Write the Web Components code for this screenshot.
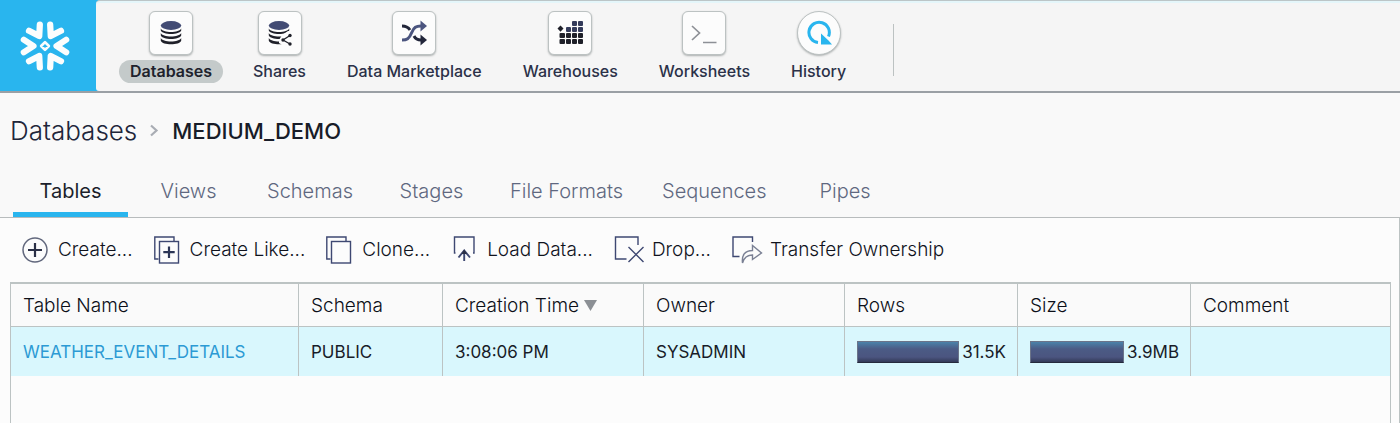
<!DOCTYPE html>
<html lang="en">
<head>
<meta charset="utf-8">
<title>Databases - MEDIUM_DEMO</title>
<style>
  html, body { height: 100%; }
  body {
    margin: 0;
    font-family: "Inter", "Liberation Sans", sans-serif;
    color: #181c28;
    background: #f9f9f9;
    overflow: hidden;
  }
</style>
</head>
<body>
<console-app></console-app>
<script>
const ICONS = {
  database: `<svg width="22" height="26" viewBox="0 0 22 26" fill="#1f2029"><ellipse cx="11" cy="5.5" rx="10.2" ry="4.4" fill="#434c74"/><path d="M.8 8.6c1.400 4.600 19 4.600 20.400 0v1.900c-1.400 4.600-19 4.600-20.400 0zM.8 13.100c1.400 4.600 19 4.600 20.400 0v2.400c-1.400 4.600-19 4.600-20.400 0zM.8 18.100c1.400 4.600 19 4.600 20.400 0v2.600c-1.400 4.700-19 4.700-20.400 0z"/></svg>`,
  shares: `<svg width="26" height="26" viewBox="0 0 26 26" fill="#1f2029"><ellipse cx="12" cy="5.500" rx="10.200" ry="4.400" fill="#434c74"/><path d="M1.800 8.600c1.400 4.600 19 4.600 20.400 0v1.900c-1.400 4.600-19 4.600-20.400 0zM1.800 13.100c1.400 4.600 19 4.600 20.400 0v2.400c-1.400 4.600-19 4.600-20.400 0zM1.800 18.100c1.400 4.600 19 4.600 20.400 0v2.600c-1.400 4.700-19 4.700-20.400 0z"/><path d="M12 20 15 15 21 11H26V26H17L12 23z" fill="#fcfcfc"/><path d="M23 15.500 16 20 23 24" fill="none" stroke="#1f2029" stroke-width="1.300"/><circle cx="23" cy="15.500" r="1.700"/><circle cx="16" cy="20" r="1.700"/><circle cx="23" cy="24" r="1.700"/></svg>`,
  market: `<svg width="26" height="26" viewBox="0 0 26 26" fill="none" stroke-width="3"><path d="M1 6C5 6 7 7 9 10M13 16c1.500 3 3.500 4 7 4" stroke="#22263a"/><path d="M19.500 14.500 26 20 19.500 25.500z" fill="#22263a"/><path d="M1 20c5 0 7-1 9.500-7S15 6 20 6" stroke="#4b557f"/><path d="M19.500 .5 26 6 19.500 11.500z" fill="#4b557f"/></svg>`,
  warehouse: `<svg width="28" height="26" viewBox="0 0 28 26" fill="#1f2029"><g fill="#343b5b"><rect x="16" y="1" width="5" height="5" rx="1"/><rect x="22" y="1" width="5" height="5" rx="1"/><rect x="10" y="7" width="5" height="5" rx="1"/><rect x="16" y="7" width="5" height="5" rx="1"/><rect x="22" y="7" width="5" height="5" rx="1"/></g><path d="M4.500 5.500 7.500 8.500 4.500 11.800 1.500 8.500z"/><rect x="3.500" y="13" width="5.500" height="5" rx="1"/><rect x="10" y="13" width="5" height="5" rx="1"/><rect x="16" y="13" width="5" height="5" rx="1"/><rect x="22" y="13" width="5" height="5" rx="1"/><rect x="3.500" y="19" width="5.500" height="5" rx="1"/><rect x="10" y="19" width="5" height="5" rx="1"/><rect x="16" y="19" width="5" height="5" rx="1"/><rect x="22" y="19" width="5" height="5" rx="1"/></svg>`,
  worksheet: `<svg width="26" height="26" viewBox="0 0 26 26" fill="none" stroke="#8d9096" stroke-width="1.700"><path d="M1 6 8.500 13 1 20M12 22.500H25.500"/></svg>`,
  history: `<svg width="26" height="26" viewBox="0 0 26 26"><path d="M12 22.600A10.200 10.200 0 1 1 22.500 16.500" fill="none" stroke="#29b5ee" stroke-width="3"/><path d="M15 13.500V24.500H26L22.500 20.500z" fill="#29b5ee"/></svg>`,
  create: `<svg width="26" height="26" viewBox="0 0 26 26" fill="none"><circle cx="13" cy="13" r="12" stroke="#62687d" stroke-width="1.500"/><path d="M13 6V20M6 13H20" stroke="#2b3046" stroke-width="2.200"/></svg>`,
  like: `<svg width="26" height="28" viewBox="0 0 26 28" fill="none" stroke="#3e4872" stroke-width="1.400"><path d="M4.500 23H.8V1H20V5"/><rect x="5.500" y="5.500" width="19" height="21.500"/><path d="M15 10.500V22M9.300 16.200H20.700" stroke="#2b3556" stroke-width="2.200"/></svg>`,
  clone: `<svg width="26" height="28" viewBox="0 0 26 28" fill="none" stroke="#3e4872" stroke-width="1.400"><path d="M4.500 23H.8V1H20V5"/><rect x="5.500" y="5.500" width="19" height="21.500"/></svg>`,
  load: `<svg width="26" height="28" viewBox="0 0 26 28" fill="none" stroke="#3e4872" stroke-width="1.400"><path d="M4.500 17H3.500V1H23V17H22"/><path d="M13.200 25V14.500M7.500 21.500 13.200 14.500 19 21.500" stroke-width="1.900"/><path d="M13.200 13.500 16 18H10.500z" fill="#2b3046" stroke="none"/></svg>`,
  drop: `<svg width="28" height="28" viewBox="0 0 28 28" overflow="visible" fill="none" stroke="#3e4872" stroke-width="1.400"><path d="M12.500 23H1.500V1H24V9"/><path d="M14.500 11 29.500 26M29.500 11 14.500 26"/></svg>`,
  transfer: `<svg width="28" height="28" viewBox="0 0 28 28" overflow="visible" fill="none" stroke="#3e4872" stroke-width="1.400"><path d="M7.500 20.500H1V1H20.500V6"/><path d="M10.500 27C9.500 19 13 14.500 20.500 14.500V9.500L29.500 17 20.500 23.500V19C15 19 12 21.500 10.500 27z" stroke="#7a8094"/></svg>`
};

function define(name, css, html) {
  customElements.define(name, class extends HTMLElement {
    constructor() {
      super();
      const markup = typeof html === "function" ? html(this) : html;
      this.attachShadow({ mode: "open" }).innerHTML = `<style>${css}</style>${markup}`;
    }
  });
}

define("brand-logo", `
  :host { display: flex; width: 96px; background: #29b5ee; }
  a { flex: 1; display: flex; align-items: center; padding-left: 20px; }
`, `<a href="#home" aria-label="Snowflake"><svg width="50" height="52" viewBox="-26 -26 52 52" fill="none" stroke="#fbfdfd" stroke-width="6.500" stroke-linecap="round" stroke-linejoin="round">
  ${[0, 60, 120, 180, 240, 300].map(a => `<path transform="rotate(${a})" d="M22 -6.500 12 0 22 6.500"/>`).join("")}
  <path d="M0-4 4 0 0 4-4 0z" stroke-width="2.800"/></svg></a>`);

define("nav-item", `
  :host { display: block; }
  a { display: flex; flex-direction: column; align-items: center; gap: 5px; color: #2b3148; text-decoration: none; }
  .box { box-sizing: border-box; width: 44px; height: 44px; display: flex; align-items: center; justify-content: center;
    background: #fcfcfc; border: 1px solid #bcc2c2; border-radius: 6px; box-shadow: 0 1px 2px rgba(60,70,70,.4); }
  :host([round]) .box { border-radius: 50%; }
  .label { font-size: 16px; line-height: 23px; font-weight: 500; padding: 0 11px; border-radius: 12px; white-space: nowrap; }
  :host([active]) .label { background: #c4caca; color: #20222c; font-weight: 600; }
`, el => `<a href="#${el.getAttribute("icon")}"><span class="box">${ICONS[el.getAttribute("icon")]}</span><span class="label"><slot></slot></span></a>`);

define("top-bar", `
  :host { display: flex; background: #29b5ee; border-bottom: 2px solid #9ba0a5; }
  nav { flex: 1; display: flex; align-items: center; gap: 19px; padding: 10px 23px 8px; background: #f5f5f5;
    border-top: 1px solid #bcc5c7; border-top-left-radius: 4px; border-bottom-left-radius: 3px; box-shadow: inset 0 2px #e4f6fa; }
  .rule { width: 1px; height: 52px; margin: 6px 0 0 17px; background: #bcc2c2; }
`, `<brand-logo></brand-logo><nav aria-label="Main"><slot></slot><span class="rule"></span></nav>`);

define("bread-crumb", `
  :host { display: flex; align-items: center; gap: 13px; padding: 20px 10px 0; line-height: 36px; }
  a { font-size: 26px; font-weight: 300; color: #20253a; text-decoration: none; }
  strong { font-size: 22px; font-weight: 500; }
`, `<a href="#databases"><slot name="parent"></slot></a><svg width="9" height="14" viewBox="0 0 9 14" fill="none" stroke="#a9adb4" stroke-width="2.200"><path d="M1 1.500 6.500 6.500 1 11.500"/></svg><strong><slot></slot></strong>`);

define("tab-item", `
  :host { display: block; }
  button { font: 300 20px/28px "Inter", sans-serif; color: #5f6880; background: none; border: 0; border-bottom: 5px solid transparent;
    min-width: 115px; padding: 0 18px 7px; white-space: nowrap; display: block; }
  :host([active]) button { color: #1c1f2b; font-weight: 400; border-bottom-color: #29b5ee; }
`, el => `<button role="tab" aria-selected="${el.hasAttribute("active")}"><slot></slot></button>`);

define("tab-strip", `
  :host { display: block; padding: 28px 13px 0; border-bottom: 1px solid #b8bcbd; }
  div { display: flex; gap: 3px; }
`, `<div role="tablist"><slot></slot></div>`);

define("tool-button", `
  :host { display: block; }
  button { display: flex; align-items: center; gap: 10px; padding: 0; border: 0; background: none; color: #10131d;
    font: 300 19px/28px "Inter", sans-serif; white-space: nowrap; }
`, el => `<button>${ICONS[el.getAttribute("icon")]}<span><slot></slot></span></button>`);

define("tool-bar", `
  :host { display: flex; gap: 21px; padding: 18px 22px; }
`, `<slot></slot>`);

define("meter-cell", `
  :host { display: flex; align-items: center; gap: 3px; }
  .bar { box-sizing: border-box; flex: 1; height: 22px; border: 1px solid #6b7489; border-bottom-color: #252a3c;
    background: linear-gradient(#4a82aa, #4b5b85 35%, #4b5580 75%, #333a58); }
`, `<span class="bar"></span><slot></slot>`);

define("data-table", `
  :host { flex: 1; display: block; margin: 0 8px 0 10px; border: 1px solid #bcc3c3; border-top-width: 2px; border-bottom: 0; }
  table { width: 100%; border-collapse: separate; border-spacing: 0; table-layout: fixed; }
  th, td { box-sizing: border-box; padding: 0 11px 0 12px; text-align: left; white-space: nowrap; border-right: 1px solid #bcc3c3; }
  th:last-child, td:last-child { border-right: 0; }
  th { height: 43px; font-size: 19px; font-weight: 300; color: #0c0f18; background: #fafafa; border-bottom: 1px solid #bcc3c3; }
  td { height: 49px; font-size: 17px; background: #d9f7fd; }
  th svg { margin-left: 5px; vertical-align: 1px; }
  a { color: #2c9ad4; text-decoration: none; }
  .name { width: 288px; } .schema { width: 144px; } .wide { width: 201px; } .num { width: 173px; }
`, `<table>
  <colgroup><col class="name"><col class="schema"><col class="wide"><col class="wide"><col class="num"><col class="num"><col></colgroup>
  <thead><tr><th scope="col">Table Name</th><th scope="col">Schema</th><th scope="col" aria-sort="descending">Creation Time<svg width="13" height="11" viewBox="0 0 13 11"><path d="M0 0H13L6.500 11z" fill="#8b8f94"/></svg></th><th scope="col">Owner</th><th scope="col">Rows</th><th scope="col">Size</th><th scope="col">Comment</th></tr></thead>
  <tbody><tr><td><a href="#weather">WEATHER_EVENT_DETAILS</a></td><td>PUBLIC</td><td>3:08:06 PM</td><td>SYSADMIN</td><td><meter-cell>31.5K</meter-cell></td><td><meter-cell>3.9MB</meter-cell></td><td></td></tr></tbody>
</table>`);

define("console-app", `
  :host { display: flex; flex-direction: column; height: 100%; }
  main { flex: 1; display: flex; flex-direction: column; }
  section { flex: 1; display: flex; flex-direction: column; background: #fcfcfc; border-right: 1px solid #bcc3c3; }
`, `<top-bar>
  <nav-item icon="database" active>Databases</nav-item>
  <nav-item icon="shares">Shares</nav-item>
  <nav-item icon="market">Data Marketplace</nav-item>
  <nav-item icon="warehouse">Warehouses</nav-item>
  <nav-item icon="worksheet">Worksheets</nav-item>
  <nav-item icon="history" round>History</nav-item>
</top-bar>
<main>
  <bread-crumb><span slot="parent">Databases</span>MEDIUM_DEMO</bread-crumb>
  <tab-strip>
    <tab-item active>Tables</tab-item><tab-item>Views</tab-item><tab-item>Schemas</tab-item><tab-item>Stages</tab-item><tab-item>File Formats</tab-item><tab-item>Sequences</tab-item><tab-item>Pipes</tab-item>
  </tab-strip>
  <section>
    <tool-bar>
      <tool-button icon="create">Create...</tool-button>
      <tool-button icon="like">Create Like...</tool-button>
      <tool-button icon="clone">Clone...</tool-button>
      <tool-button icon="load">Load Data...</tool-button>
      <tool-button icon="drop">Drop...</tool-button>
      <tool-button icon="transfer">Transfer Ownership</tool-button>
    </tool-bar>
    <data-table></data-table>
  </section>
</main>`);
</script>
</body>
</html>
